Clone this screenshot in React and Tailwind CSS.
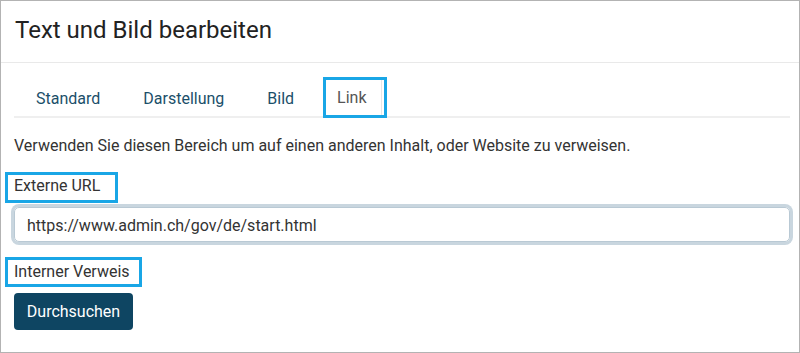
import React from "react";

export default function App() {
  const tabs = ["Standard", "Darstellung", "Bild"];
  return (
    <div
      className="w-[800px] h-[353px] border border-[#b3b3b3] bg-white text-[#333]"
      style={{ fontFamily: "Roboto, 'Liberation Sans', sans-serif" }}
    >
      <div className="h-[62px] border-b border-[#e9e9e9] px-[14px] pb-[4px] flex items-center">
        <h1 className="text-[24px] text-[#222] leading-none">Text und Bild bearbeiten</h1>
      </div>
      <div className="pl-[13px] pr-[9px]">
        <div className="mt-[16px] flex items-end border-b-2 border-[#efefef] h-[39px]">
          <div className="flex items-end gap-[15px] ml-[8px] h-full">
            {tabs.map((t) => (
              <div
                key={t}
                className="px-[14px] h-[37px] pt-[2px] flex items-center text-[16px] text-[#1b4f6a]"
              >
                {t}
              </div>
            ))}
            <div className="relative px-[14px] h-[38px] pt-[2px] flex items-center text-[16px] text-[#555] border-r border-[#e6e6e6] bg-white">
              Link
              <span className="absolute left-0 top-[-1px] w-[64px] h-[41px] border-[3px] border-[#19a6e6]" />
            </div>
          </div>
        </div>
        <p className="mt-[17px] text-[16px] leading-[22px] text-[#333]">
          Verwenden Sie diesen Bereich um auf einen anderen Inhalt, oder Website zu verweisen.
        </p>
        <div className="mt-[18px] relative inline-block text-[16px] leading-[22px] text-[#333]">
          Externe URL
          <span className="absolute left-[-9px] top-[-3px] w-[113px] h-[31px] border-[3px] border-[#19a6e6]" />
        </div>
        <div className="mt-[9px] h-[35px] rounded-[5px] border border-[#b9c9d4] shadow-[0_0_0_3px_#c9d6df] flex items-center pl-[12px] pt-[2px] text-[16px] text-[#333]">
          https://www.admin.ch/gov/de/start.html
        </div>
        <div className="mt-[19px] relative inline-block text-[16px] leading-[22px] text-[#333]">
          Interner Verweis
          <span className="absolute left-[-9px] top-[-4px] w-[137px] h-[30px] border-[3px] border-[#19a6e6]" />
        </div>
        <div>
          <button className="mt-[9px] h-[37px] w-[119px] rounded-[4px] bg-[#0e4562] text-white text-[16px] font-normal">
            Durchsuchen
          </button>
        </div>
      </div>
    </div>
  );
}
